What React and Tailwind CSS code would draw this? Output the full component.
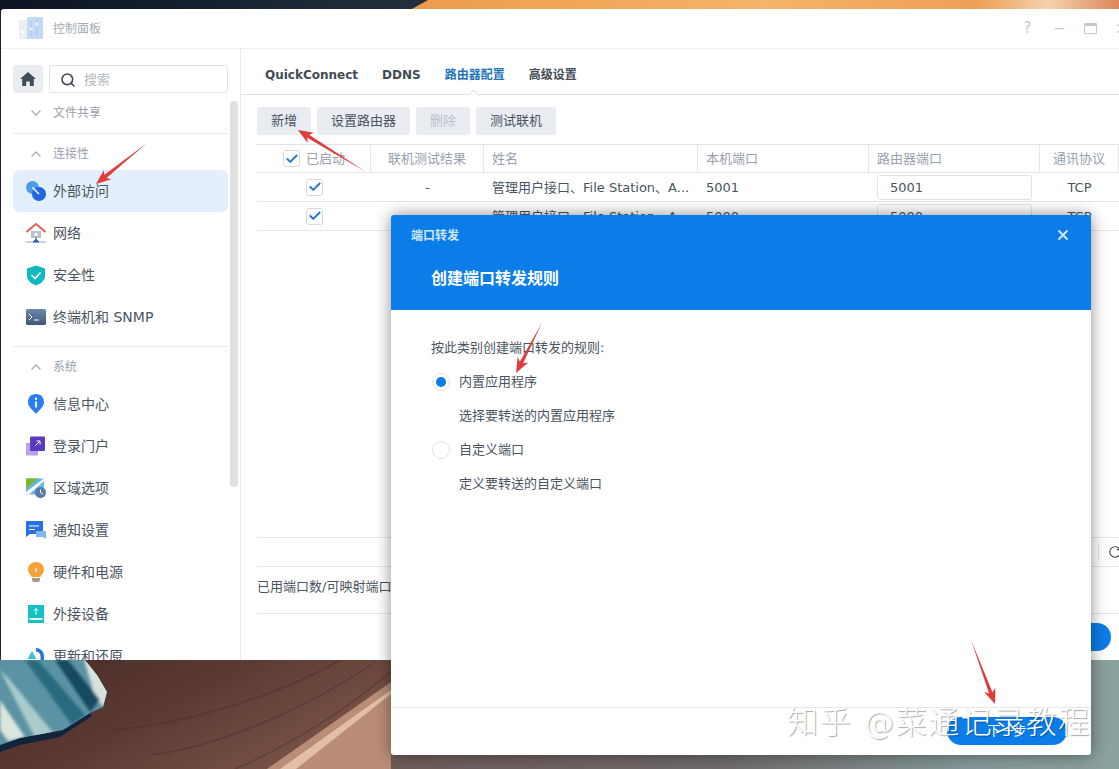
import React from 'react';
import { Search, ChevronDown, ChevronUp, RotateCw, X, Check, Minus } from 'lucide-react';

const FONT = "font-['DejaVu_Sans','Noto_Sans_CJK_SC',sans-serif]";

// wallpaper behind the window
const Wallpaper = () => (
  <svg className="absolute inset-0" width="1119" height="769" viewBox="0 0 1119 769">
    <defs>
      <linearGradient id="topDark" x1="0" x2="1" y1="0" y2="0">
        <stop offset="0" stopColor="#0b1320" />
        <stop offset="0.5" stopColor="#2c3946" />
        <stop offset="1" stopColor="#1c2a3b" />
      </linearGradient>
      <linearGradient id="topOrange" x1="0" x2="1" y1="0" y2="0">
        <stop offset="0" stopColor="#ee9a4c" />
        <stop offset="0.5" stopColor="#f5b469" />
        <stop offset="0.8" stopColor="#ef9f55" />
        <stop offset="0.9" stopColor="#f4d2ae" />
        <stop offset="1" stopColor="#dd8659" />
      </linearGradient>
      <linearGradient id="wood" x1="0" x2="1" y1="0" y2="0.5">
        <stop offset="0" stopColor="#472a29" />
        <stop offset="0.5" stopColor="#5c3a33" />
        <stop offset="1" stopColor="#7d5548" />
      </linearGradient>
      <linearGradient id="stone" x1="0" x2="1" y1="0" y2="0">
        <stop offset="0" stopColor="#6d5c58" />
        <stop offset="0.45" stopColor="#6f6a6b" />
        <stop offset="0.8" stopColor="#86999a" />
        <stop offset="1" stopColor="#8aa19c" />
      </linearGradient>
      <clipPath id="rock">
        <polygon points="0,660 85,660 97,675 107,692 103,707 90,713 63,730 20,738 0,745" />
      </clipPath>
      <filter id="soft">
        <feGaussianBlur stdDeviation="1.4" />
      </filter>
    </defs>
    <rect width="1119" height="10" fill="url(#topDark)" />
    <polygon points="428,0 1119,0 1119,10 410,10" fill="url(#topOrange)" />
    <rect y="10" width="2" height="650" fill="#1a2026" />
    <rect y="655" width="420" height="114" fill="url(#wood)" />
    <g fill="none" stroke="#3e2525" strokeOpacity="0.35" strokeWidth="1.5">
      <path d="M110 730 C190 725 290 690 340 660" />
      <path d="M150 755 C230 745 320 700 375 662" />
      <path d="M235 769 C290 745 345 710 391 672" />
    </g>
    <polygon points="267,769 391,682 391,769" fill="#b98d78" />
    <polygon points="280,769 391,690 391,694 296,769" fill="#e2bfa6" />
    <rect x="391" y="655" width="728" height="114" fill="url(#stone)" />
    <polygon points="0,745 20,738 63,730 90,713 92,716 60,737 20,745 0,752" fill="#10243c" />
    <g clipPath="url(#rock)">
      <rect width="120" height="100" y="655" fill="#5b93a4" />
      <g filter="url(#soft)">
        <polygon points="84,660 108,660 108,710 96,700" fill="#d8e0dc" />
        <polygon points="25,660 38,660 85,715 72,725" fill="#2a6a80" />
        <polygon points="55,660 68,660 100,700 90,712" fill="#174a62" />
        <polygon points="0,670 10,680 55,735 35,738" fill="#a9cbca" />
        <polygon points="0,700 25,737 8,741 0,730" fill="#dde5df" />
      </g>
    </g>
  </svg>
);

const RedArrow = ({ from, to }) => {
  const dx = to[0] - from[0];
  const dy = to[1] - from[1];
  const len = Math.hypot(dx, dy);
  const ux = dx / len;
  const uy = dy / len;
  const px = -uy;
  const py = ux;
  const at = (back, side) => `${to[0] - ux * back + px * side},${to[1] - uy * back + py * side}`;
  const points = [`${from[0]},${from[1]}`, at(12, 1.8), at(15, 6), `${to[0]},${to[1]}`, at(15, -6), at(12, -1.8)].join(' ');
  return <polygon points={points} fill="#e23b3b" />;
};

// sidebar icons
const IconHome = () => (
  <svg width="16" height="14" viewBox="0 0 16 14">
    <path d="M8 0 L16 7 H13.8 V14 H9.8 V9.5 H6.2 V14 H2.2 V7 H0Z" fill="#414b55" />
  </svg>
);
const IconExternal = () => (
  <svg width="20" height="20" viewBox="0 0 20 20">
    <circle cx="6.5" cy="6.5" r="6.5" fill="#4a9be8" />
    <circle cx="13" cy="13" r="7" fill="#1f66e0" />
    <path d="M6.5 6.5 L13 13" stroke="#fff" strokeWidth="1.5" />
  </svg>
);
const IconNetwork = () => (
  <svg width="20" height="21" viewBox="0 0 20 21">
    <path d="M5 8 h10 v7 h-10z" fill="#b9c0c8" />
    <path d="M8.5 10 h3 v3 h-3z" fill="#fff" />
    <path d="M0.5 9 L10 1 L19.5 9" fill="none" stroke="#e0655f" strokeWidth="2" />
    <path d="M0 19 h20" stroke="#9db4d6" strokeWidth="1.2" />
    <path d="M10 14 v3 M7 19 L10 16 L13 19z" stroke="#2d69b8" fill="#2d69b8" strokeWidth="1" />
  </svg>
);
const IconShield = () => (
  <svg width="20" height="21" viewBox="0 0 20 21">
    <path d="M10 0.5 L19 3.5 V11 C19 16 14 19 10 20.5 C6 19 1 16 1 11 V3.5Z" fill="#10b9bd" />
    <path d="M5.5 10 L9 13.5 L14.5 7.5" fill="none" stroke="#fff" strokeWidth="1.6" />
  </svg>
);
const IconTerminal = () => (
  <svg width="20" height="16" viewBox="0 0 20 16">
    <defs>
      <linearGradient id="termBg" x1="0" x2="0" y1="0" y2="1">
        <stop offset="0" stopColor="#6a89ad" />
        <stop offset="1" stopColor="#3f5878" />
      </linearGradient>
    </defs>
    <rect width="20" height="16" rx="1.5" fill="url(#termBg)" />
    <path d="M3 5 L6 8 L3 11" fill="none" stroke="#fff" strokeWidth="1" />
    <path d="M8 11 h5" stroke="#fff" strokeWidth="1" />
  </svg>
);
const IconInfo = () => (
  <svg width="18" height="20" viewBox="0 0 18 20">
    <path d="M9 0 C14 0 17 3.6 17 8 C17 13 12 16 9 20 C6 16 1 13 1 8 C1 3.6 4 0 9 0Z" fill="#2a7df0" />
    <circle cx="9" cy="4.8" r="1.2" fill="#fff" />
    <path d="M9 7.5 v6" stroke="#fff" strokeWidth="1.8" />
  </svg>
);
const IconLogin = () => (
  <svg width="20" height="20" viewBox="0 0 20 20">
    <rect x="0" y="7" width="12" height="12.5" fill="#b9a2ea" />
    <rect x="4" y="0.5" width="15" height="14.5" rx="1" fill="#5a3bc0" />
    <path d="M9.5 9.5 L14 5 M10.5 5 H14 V8.5" fill="none" stroke="#fff" strokeWidth="1" />
  </svg>
);
const IconRegion = () => (
  <svg width="20" height="20" viewBox="0 0 20 20">
    <rect y="0.5" width="18" height="16" fill="#62b7e8" />
    <polygon points="0,0.5 12,0.5 0,11" fill="#7fb52f" />
    <polygon points="18,0.5 18,3 3,16.5 0,16.5 0,14" fill="#fff" />
    <circle cx="14.5" cy="14.5" r="5.5" fill="#5a7aa8" />
    <path d="M14.5 11.5 V14.5 L17 16" fill="none" stroke="#fff" strokeWidth="1" />
  </svg>
);
const IconNotify = () => (
  <svg width="20" height="18" viewBox="0 0 20 18">
    <path d="M0 1 a1 1 0 0 1 1-1 H17 V13 H4 L0 16Z" fill="#2a6fe0" />
    <path d="M3 5 h10 M3 8.5 h6" stroke="#fff" strokeWidth="1" />
    <path d="M10 10 h10 v8 l-3-2 h-7z" fill="#7cb8f4" />
  </svg>
);
const IconBulb = () => (
  <svg width="16" height="20" viewBox="0 0 16 20">
    <path d="M8 0 C12.5 0 16 3.2 16 7.5 C16 11 13.5 12.5 12.5 15 H3.5 C2.5 12.5 0 11 0 7.5 C0 3.2 3.5 0 8 0Z" fill="#f5a338" />
    <path d="M4 16 h8 v2 a2 2 0 0 1 -2 2 h-4 a2 2 0 0 1 -2-2z" fill="#a79a86" />
    <path d="M8 6 v4" stroke="#fff" strokeWidth="1.2" />
  </svg>
);
const IconDevice = () => (
  <svg width="16" height="18" viewBox="0 0 16 18">
    <rect width="16" height="18" fill="#16c0c4" />
    <path d="M8 9.5 V3.5 M5.8 5.8 L8 3.5 L10.2 5.8" fill="none" stroke="#fff" strokeWidth="1" />
    <path d="M1.5 14 h13" stroke="#fff" strokeWidth="1.8" />
  </svg>
);
const IconUpdate = () => (
  <svg width="18" height="18" viewBox="0 0 18 18">
    <path d="M9 1 A8 8 0 0 1 17 9 V18 H13.5 V9 A5 5 0 0 0 9 4.5Z" fill="#2a72dc" />
    <polygon points="5,4 9.5,12 0.5,12" fill="#3fc0cf" />
  </svg>
);
const IconPanel = () => (
  <svg width="24" height="23" viewBox="0 0 24 23" className="opacity-60">
    <rect x="0" y="3" width="10" height="19" rx="2" fill="#dfe3e8" />
    <rect x="8" y="0" width="16" height="22" rx="1" fill="#9cc0f0" />
    <path d="M12 3 v16 M18 3 v16" stroke="#6f9fe0" strokeWidth="1" />
    <circle cx="12" cy="12" r="1.6" fill="#e8f0fb" />
    <circle cx="18" cy="7" r="1.6" fill="#e8f0fb" />
    <circle cx="4" cy="15" r="2" fill="#fff" />
  </svg>
);

const SectionHead = ({ label, open }) => (
  <div className={`flex items-center h-[36px] text-xs text-[#98a1ac] ${open ? 'pt-1' : ''}`}>
    <span className="w-[40px] flex justify-center">
      {open ? <ChevronUp size={16} className="text-[#a8afb8] ml-[5px]" /> : <ChevronDown size={16} className="text-[#a8afb8] ml-[5px]" />}
    </span>
    {label}
  </div>
);

const NavItem = ({ icon, label, active }) => (
  <div className={`flex items-center h-[42px] rounded-md text-sm text-[#4a545f] ${active ? 'bg-[#e3effa]' : ''}`}>
    <span className="w-[40px] flex justify-center pl-[6px]">{icon}</span>
    {label}
  </div>
);

const Sidebar = () => (
  <div className="relative w-[240px] shrink-0 border-r border-[#e6e9ed] pt-4 overflow-hidden">
    <div className="flex gap-[6px] pl-3 pr-3 h-[28px]">
      <div className="w-[30px] rounded-[3px] bg-[#e9edf2] flex items-center justify-center">
        <IconHome />
      </div>
      <div className="w-[179px] rounded-[3px] border border-[#dfe3e8] flex items-center pl-[10px] pt-[1px] gap-2 text-[13px] text-[#b4bac2]">
        <Search size={16} className="text-[#414b55]" strokeWidth={2.4} />
        搜索
      </div>
    </div>
    <div className="pl-3 pr-3 w-[239px]">
      <div className="h-[41px] pt-[2px] border-b border-[#e6e9ed]">
        <SectionHead label="文件共享" />
      </div>
      <SectionHead label="连接性" open />
      <NavItem active icon={<IconExternal />} label="外部访问" />
      <NavItem icon={<IconNetwork />} label="网络" />
      <NavItem icon={<IconShield />} label="安全性" />
      <NavItem icon={<IconTerminal />} label="终端机和 SNMP" />
      <div className="mt-2 border-t border-[#e6e9ed]" />
      <SectionHead label="系统" open />
      <NavItem icon={<IconInfo />} label="信息中心" />
      <NavItem icon={<IconLogin />} label="登录门户" />
      <NavItem icon={<IconRegion />} label="区域选项" />
      <NavItem icon={<IconNotify />} label="通知设置" />
      <NavItem icon={<IconBulb />} label="硬件和电源" />
      <NavItem icon={<IconDevice />} label="外接设备" />
      <NavItem icon={<IconUpdate />} label="更新和还原" />
    </div>
    {/* scrollbar thumb */}
    <div className="absolute left-[229px] top-[52px] w-2 h-[386px] rounded bg-[#e0e0e0]" />
  </div>
);

const Box = ({ className = '' }) => (
  <span className={`w-[17px] h-[17px] rounded-[3px] border border-[#d5dae0] bg-white flex items-center justify-center ${className}`}>
    <Check size={14} strokeWidth={3.2} className="text-[#1f74c9]" />
  </span>
);

const COLS = ['w-[114px]', 'w-[113px]', 'w-[214px]', 'w-[171px]', 'w-[171px]', 'w-[79px]'];

const Row = ({ port }) => (
  <div className="flex h-[29px] border-b border-[#e3e6ea] text-[13px] text-[#4a545f]">
    <div className={`${COLS[0]} shrink-0 flex items-center pl-[49px]`}><Box /></div>
    <div className={`${COLS[1]} shrink-0 flex items-center justify-center pt-[1px]`}>-</div>
    <div className={`${COLS[2]} shrink-0 flex items-center pl-2 pt-[1px] whitespace-nowrap overflow-hidden`}>管理用户接口、File Station、A...</div>
    <div className={`${COLS[3]} shrink-0 flex items-center pl-2 pt-[1px]`}>{port}</div>
    <div className={`${COLS[4]} shrink-0 flex items-center pl-2`}>
      <span className="w-[155px] h-[25px] rounded-[3px] border border-[#dfe3e8] flex items-center pl-3 pt-[1px]">{port}</span>
    </div>
    <div className={`${COLS[5]} shrink-0 flex items-center justify-center pt-[1px]`}>TCP</div>
  </div>
);

const HeadCell = ({ w, children, center }) => (
  <div className={`${w} shrink-0 border-r border-[#e3e6ea] flex items-center ${center ? 'justify-center' : 'pl-2'}`}>{children}</div>
);

const ToolButton = ({ children, disabled, w }) => (
  <div className={`${w} h-[28px] rounded-[3px] bg-[#e9edf2] flex items-center justify-center pb-[1px] text-[13px] ${disabled ? 'text-[#bcc3cb]' : 'text-[#4a545f]'}`}>
    {children}
  </div>
);

const Main = () => (
  <div className="flex-1 min-w-0 flex flex-col pl-4 overflow-hidden">
    <div className="relative h-[46px] -ml-4 pl-6 border-b border-[#dfe3e8] flex items-center gap-6 text-xs font-bold text-[#414b55] pt-[7px]">
      <span>QuickConnect</span>
      <span>DDNS</span>
      <span className="text-[#1f74b8]">路由器配置</span>
      <span>高级设置</span>
      <span className="absolute left-[229px] bottom-[-4px] w-[7px] h-[7px] rotate-45 bg-white border-l border-t border-[#dfe3e8]" />
    </div>
    <div className="flex gap-[6px] mt-3">
      <ToolButton w="w-[54px]">新增</ToolButton>
      <ToolButton w="w-[93px]">设置路由器</ToolButton>
      <ToolButton w="w-[54px]" disabled>删除</ToolButton>
      <ToolButton w="w-[80px]">测试联机</ToolButton>
    </div>
    <div className="mt-[9px] w-[862px] border-t border-[#dfe3e8]">
      <div className="flex h-[28px] border-b border-[#e3e6ea] text-[13px] text-[#98a1ac]">
        <HeadCell w={COLS[0]}>
          <Box className="ml-[18px] mr-[6px]" />
          已启动
        </HeadCell>
        <HeadCell w={COLS[1]} center>联机测试结果</HeadCell>
        <HeadCell w={COLS[2]}>姓名</HeadCell>
        <HeadCell w={COLS[3]}>本机端口</HeadCell>
        <HeadCell w={COLS[4]}>路由器端口</HeadCell>
        <HeadCell w={COLS[5]} center>通讯协议</HeadCell>
      </div>
      <Row port="5001" />
      <Row port="5000" />
    </div>
    <div className="flex-1" />
    <div className="h-[30px] border-t border-b border-[#e3e6ea] flex items-center justify-end gap-[9px] -mr-[3px]">
      <span className="w-px h-[16px] bg-[#dfe3e8]" />
      <RotateCw size={14} className="text-[#414b55]" />
    </div>
    <div className="h-[47px] border-b border-[#e3e6ea] flex items-center text-[13px] text-[#4a545f] pb-[6px]">
      已用端口数/可映射端口数：2/4096
    </div>
    <div className="h-[46px] flex items-start justify-end pr-2 pt-[9px]">
      <span className="w-[120px] h-[28px] rounded-full bg-[#0a7de8]" />
    </div>
  </div>
);

const RadioRow = ({ label, checked }) => (
  <div className="h-[34px] flex items-center">
    <span className="w-[18px] h-[18px] ml-[1px] rounded-full border border-[#dfe3e8] flex items-center justify-center mr-[9px]">
      {checked && <span className="w-[10px] h-[10px] rounded-full bg-[#0a7de8]" />}
    </span>
    {label}
  </div>
);

const Modal = () => (
  <div className="absolute left-[391px] top-[215px] w-[700px] h-[540px] flex flex-col bg-white rounded-[3px] shadow-[0_0_16px_rgba(0,0,0,0.45)] overflow-hidden">
    <div className="h-[95px] shrink-0 bg-[#0a7de8] text-white relative">
      <div className="pl-5 pt-[13px] text-xs font-bold text-[#cfe6fb]">端口转发</div>
      <div className="pl-10 pt-[23px] text-base font-bold">创建端口转发规则</div>
      <X size={16} strokeWidth={3} className="absolute right-[20px] top-3 text-[#cfe6fb]" />
    </div>
    <div className="flex-1 pl-10 pt-[21px] text-[13px] text-[#4a545f]">
      <div className="h-[34px] flex items-center">按此类别创建端口转发的规则:</div>
      <RadioRow label="内置应用程序" checked />
      <div className="h-[34px] flex items-center pl-7">选择要转送的内置应用程序</div>
      <RadioRow label="自定义端口" />
      <div className="h-[34px] flex items-center pl-7">定义要转送的自定义端口</div>
    </div>
    <div className="h-[48px] shrink-0 border-t border-[#e3e6ea] flex items-start justify-end pr-6 pt-[9px]">
      <span className="w-[120px] h-[28px] rounded-full bg-[#0a7de8] flex items-center justify-center text-[13px] text-white">下一步</span>
    </div>
  </div>
);

export default function App() {
  return (
    <div className={`relative w-[1119px] h-[769px] overflow-hidden ${FONT}`}>
      <Wallpaper />

      {/* control panel window */}
      <div className="absolute left-[1px] top-[9px] w-[1118px] h-[651px] bg-white flex flex-col rounded-tl-[3px]">
        <div className="h-[40px] shrink-0 border-b border-[#eceef1] flex items-center pl-[18px] text-xs text-[#a5abb3]">
          <IconPanel />
          <span className="ml-[10px]">控制面板</span>
          <div className="ml-auto flex items-center gap-[17px] pr-[12px] text-[#c4c9cf]">
            <span className="text-[15px] w-[15px] text-center">?</span>
            <Minus size={15} />
            <span className="w-[13px] h-[11px] border border-[#c4c9cf] border-t-[3px] rounded-[1px]" />
            <X size={15} className="-mr-[22px]" />
          </div>
        </div>
        <div className="flex-1 flex min-h-0">
          <Sidebar />
          <Main />
        </div>
      </div>

      <Modal />

      {/* watermark */}
      <div className="absolute left-[787px] top-[701px] whitespace-nowrap text-[31px] leading-[42px] font-light tracking-[1.5px] text-white [text-shadow:1px_1px_1px_rgba(0,0,0,0.35)]">
        知乎 @菜通记录教程
      </div>

      {/* red annotation arrows */}
      <svg className="absolute inset-0 pointer-events-none" width="1119" height="769" viewBox="0 0 1119 769">
        <RedArrow from={[147, 143]} to={[96, 184]} />
        <RedArrow from={[366, 172]} to={[298, 130]} />
        <RedArrow from={[542, 323]} to={[516, 373]} />
        <RedArrow from={[971, 640]} to={[995, 704]} />
      </svg>
    </div>
  );
}
